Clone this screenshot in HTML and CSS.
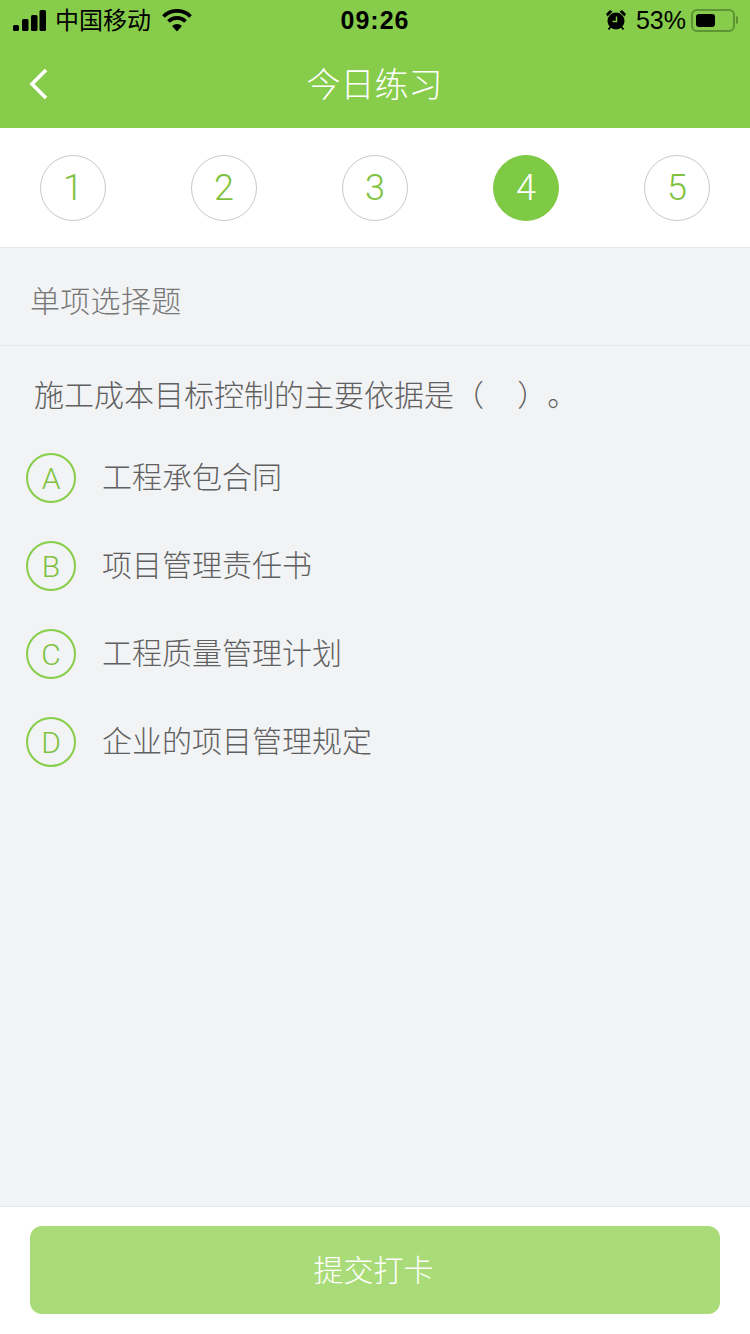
FILE: index.html
```html
<!DOCTYPE html>
<html lang="zh-CN">
<head>
  <meta charset="UTF-8">
  <meta name="viewport" content="width=device-width, initial-scale=1.0">
  <title>今日练习</title>
  <link rel="stylesheet" href="styles.css">
</head>
<body>
  <div class="page">
    <div class="header">
      <div class="status-bar">
        <div class="status-left">
          <svg class="signal" width="33" height="21" viewBox="0 0 33 21">
            <rect x="0" y="15" width="6" height="6" rx="1.5"/>
            <rect x="9" y="9" width="6.5" height="12" rx="1.5"/>
            <rect x="18" y="5" width="6.5" height="16" rx="1.5"/>
            <rect x="26.500" y="0" width="6.5" height="21" rx="1.5"/>
          </svg>
          <span class="carrier">中国移动</span>
          <svg class="wifi" width="30" height="23" viewBox="0 0 30 23">
            <path d="M1.500 7.500 A19 19 0 0 1 28.500 7.500" fill="none" stroke="#000" stroke-width="3.800"/>
            <path d="M6.500 12.500 A12 12 0 0 1 23.500 12.500" fill="none" stroke="#000" stroke-width="3.800"/>
            <path d="M10 17 A7.500 7.500 0 0 1 20 17 L15 22.500 Z"/>
          </svg>
        </div>
        <div class="status-time">09:26</div>
        <div class="status-right">
          <svg class="alarm" width="22" height="22" viewBox="0 0 22 22">
            <circle cx="11" cy="12" r="8.500"/>
            <path d="M1 5 L5 1 L7.500 2.500 L2.500 7.500 Z M21 5 L17 1 L14.500 2.500 L19.500 7.500 Z"/>
            <path d="M3.500 20.500 L5.500 18 M18.500 20.500 L16.500 18" stroke="#000" stroke-width="2"/>
            <path d="M11.500 7.500 V12.500 H7.500" fill="none" stroke="#86cd4a" stroke-width="1.400"/>
          </svg>
          <span class="percent">53%</span>
          <div class="battery">
            <div class="battery-level"></div>
          </div>
          <div class="battery-cap"></div>
        </div>
      </div>
      <div class="nav-bar">
        <svg class="back" width="20" height="32" viewBox="0 0 20 32">
          <path d="M17 2 L3 16 L17 30" fill="none" stroke="#fff" stroke-width="3.600"/>
        </svg>
        <h1 class="nav-title">今日练习</h1>
      </div>
    </div>

    <div class="steps">
      <div class="step">1</div>
      <div class="step">2</div>
      <div class="step">3</div>
      <div class="step active">4</div>
      <div class="step">5</div>
    </div>

    <div class="section-title">单项选择题</div>

    <div class="content">
      <p class="question">施工成本目标控制的主要依据是（&nbsp;&nbsp;&nbsp;&nbsp;）。</p>
      <div class="option"><span class="letter">A</span><span class="option-text">工程承包合同</span></div>
      <div class="option"><span class="letter">B</span><span class="option-text">项目管理责任书</span></div>
      <div class="option"><span class="letter">C</span><span class="option-text">工程质量管理计划</span></div>
      <div class="option"><span class="letter">D</span><span class="option-text">企业的项目管理规定</span></div>
    </div>

    <div class="footer">
      <button class="submit">提交打卡</button>
    </div>
  </div>
</body>
</html>
```

FILE: styles.css
```css
* {
  box-sizing: border-box;
}

body {
  margin: 0;
  font-family: "Liberation Sans", "Noto Sans CJK SC", sans-serif;
  background: #f2f3f5;
}

.page {
  display: flex;
  flex-direction: column;
  height: 1334px;
  overflow: hidden;
}

/* Header */
.header {
  height: 128px;
  background: #87cc4b;
}

.status-bar {
  position: relative;
  display: flex;
  justify-content: space-between;
  align-items: center;
  height: 40px;
  padding: 0 12px 0 13px;
  color: #000;
}

.status-left,
.status-right {
  display: flex;
  align-items: center;
}

.signal {
  margin-right: 9px;
}

.carrier {
  font-size: 24px;
  margin-right: 11px;
  padding-bottom: 4px;
}

.status-time {
  position: absolute;
  left: 0;
  right: 0;
  text-align: center;
  font-size: 25px;
  font-weight: 700;
  letter-spacing: 1px;
}

.alarm {
  margin-right: 9px;
}

.percent {
  font-size: 25px;
  margin-right: 5px;
}

.battery {
  width: 44px;
  height: 23px;
  padding: 3px;
  border: 2px solid #5d9434;
  border-radius: 6px;
}

.battery-level {
  width: 19px;
  height: 100%;
  background: #000;
  border-radius: 3px;
}

.battery-cap {
  width: 2px;
  height: 8px;
  margin-left: 1px;
  background: #5d9434;
  border-radius: 0 2px 2px 0;
}

.nav-bar {
  position: relative;
  display: flex;
  justify-content: center;
  align-items: center;
  height: 88px;
}

.back {
  position: absolute;
  left: 29px;
  top: 28px;
}

.nav-title {
  margin: 0;
  padding: 0 1px 4px 0;
  font-size: 34px;
  font-weight: 300;
  color: #fff;
}

/* Question steps */
.steps {
  display: flex;
  justify-content: space-between;
  align-items: center;
  height: 120px;
  padding: 0 40px;
  background: #fff;
  border-bottom: 1px solid #e6e6e6;
}

.step {
  display: flex;
  justify-content: center;
  align-items: center;
  width: 66px;
  height: 66px;
  font-family: Roboto, sans-serif;
  font-size: 36px;
  font-weight: 300;
  color: #7fc241;
  border: 1px solid #c8c8c8;
  border-radius: 50%;
}

.step.active {
  color: #fff;
  background: #7fca45;
  border-color: #7fca45;
}

.section-title {
  display: flex;
  align-items: center;
  height: 98px;
  padding: 4px 0 0 30px;
  font-size: 30px;
  font-weight: 300;
  letter-spacing: 0.3px;
  color: #777;
  border-bottom: 1px solid #e6e7e9;
}

/* Question and options */
.content {
  flex: 1;
  padding: 0 26px;
}

.question {
  margin: 30px 0 18px 8px;
  font-size: 30px;
  font-weight: 300;
  line-height: 40px;
  color: #606060;
  text-spacing-trim: space-all;
}

.option {
  display: flex;
  align-items: center;
  height: 88px;
}

.letter {
  display: flex;
  justify-content: center;
  align-items: center;
  width: 50px;
  height: 50px;
  margin-right: 26px;
  font-family: Roboto, sans-serif;
  font-size: 30px;
  font-weight: 300;
  color: #7fc241;
  border: 2px solid #86cd4a;
  border-radius: 50%;
}

.option-text {
  padding-bottom: 6px;
  font-size: 30px;
  font-weight: 300;
  color: #606060;
}

/* Submit */
.footer {
  height: 128px;
  padding: 19px 30px 0;
  background: #fff;
  border-top: 1px solid #e6e7e9;
}

.submit {
  display: block;
  width: 100%;
  height: 88px;
  padding: 0 3px 4px 0;
  font-family: inherit;
  font-size: 30px;
  font-weight: 300;
  color: #fff;
  background: #a9dc78;
  border: 0;
  border-radius: 12px;
}
```
